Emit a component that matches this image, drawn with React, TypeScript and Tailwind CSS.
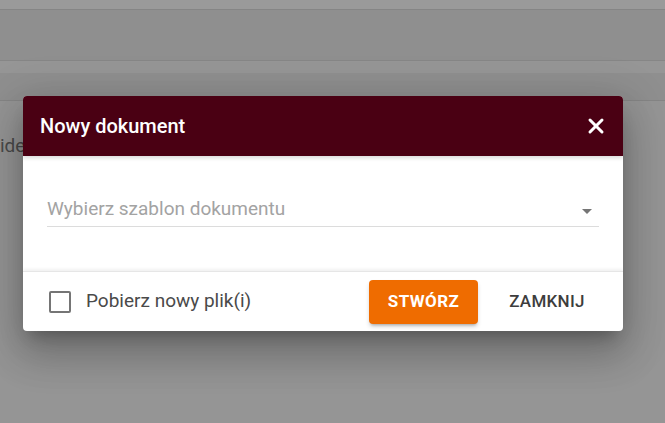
import React from 'react';
import { X } from 'lucide-react';

const App: React.FC = () => {
    return (
        <div className="relative w-[665px] h-[423px] overflow-hidden bg-[#959595] font-['Roboto',sans-serif]">
            {/* dimmed page behind the dialog */}
            <div className="h-[10px] bg-[#9a9a9a] border-b border-[#858585]" />
            <div className="h-[51px] bg-[#8f8f8f] border-b border-[#868686]" />
            <div className="h-[12px] bg-[#969696]" />
            <div className="h-[28px] bg-[#8f8f8f] border-b border-[#858585]" />
            <div className="pt-[31px] text-[19px] text-[#4a4a4a]">ide</div>

            {/* dialog */}
            <div className="absolute left-[23px] top-[96px] w-[600px] rounded-[4px] bg-white shadow-[0_11px_15px_-7px_rgba(0,0,0,0.25),0_24px_38px_3px_rgba(0,0,0,0.16),0_9px_46px_8px_rgba(0,0,0,0.14)] overflow-hidden">
                <div className="h-[60px] bg-[#4a0013] flex items-center justify-between pl-[17px] pr-[15px] shadow-[0_2px_4px_rgba(0,0,0,0.15)] relative z-10">
                    <span className="text-white text-[20px] font-medium">Nowy dokument</span>
                    <X className="w-[24px] h-[24px] text-white" strokeWidth={3} />
                </div>

                <div className="px-[24px] pt-[42px] pb-[44px]">
                    <div className="flex items-center justify-between border-b border-[#dcdcdc] pb-[6px]">
                        <span className="text-[19px] leading-[22px] text-[#a3a3a3]">Wybierz szablon dokumentu</span>
                        <svg width="10" height="5" viewBox="0 0 10 5" className="mr-[7px] mt-[4px]">
                            <path d="M0 0 L10 0 L5 5 Z" fill="#757575" />
                        </svg>
                    </div>
                </div>

                <div className="h-[60px] flex items-center border-t border-[#e6e6e6] shadow-[0_-2px_3px_rgba(0,0,0,0.06)] pl-[26px] pr-[23px]">
                    <div className="w-[22px] h-[22px] border-2 border-[#757575] rounded-[2px]" />
                    <span className="ml-[15px] text-[19px] text-[#4a4a4a]">Pobierz nowy plik(i)</span>
                    <div className="ml-auto flex items-center gap-[16px]">
                        <button className="w-[109px] h-[44px] rounded-[4px] bg-[#ef6c00] text-white text-[17px] font-bold tracking-[0.4px] shadow-[0_3px_3px_-2px_rgba(0,0,0,0.25),0_3px_4px_0_rgba(0,0,0,0.14)]">
                            STWÓRZ
                        </button>
                        <button className="w-[106px] h-[44px] text-[#3d3d3d] text-[17px] font-medium tracking-[0.3px]">
                            ZAMKNIJ
                        </button>
                    </div>
                </div>
            </div>
        </div>
    );
};

export default App;
